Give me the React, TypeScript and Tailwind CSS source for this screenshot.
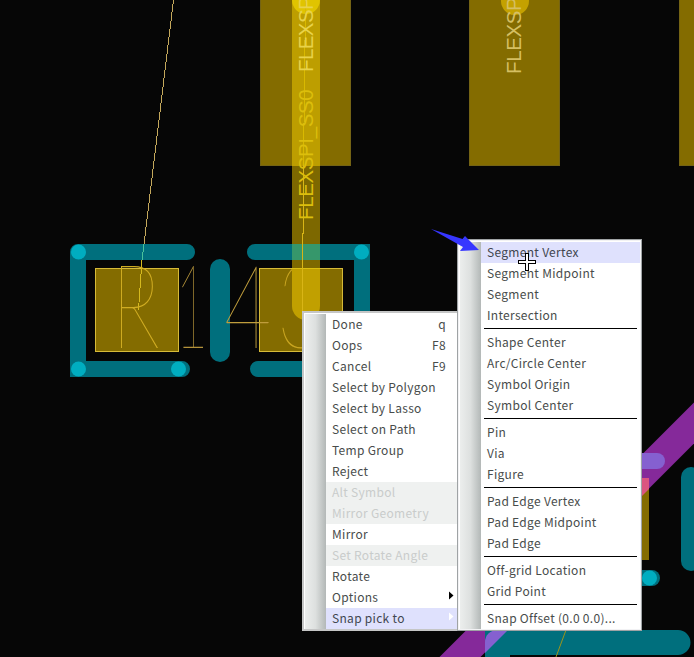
import React from "react";

type Item = {
  label: string;
  shortcut?: string;
  disabled?: boolean;
  active?: boolean;
  submenu?: boolean;
};

const commands: Item[] = [
  { label: "Done", shortcut: "q" },
  { label: "Oops", shortcut: "F8" },
  { label: "Cancel", shortcut: "F9" },
  { label: "Select by Polygon" },
  { label: "Select by Lasso" },
  { label: "Select on Path" },
  { label: "Temp Group" },
  { label: "Reject" },
  { label: "Alt Symbol", disabled: true },
  { label: "Mirror Geometry", disabled: true },
  { label: "Mirror" },
  { label: "Set Rotate Angle", disabled: true },
  { label: "Rotate" },
  { label: "Options", submenu: true },
  { label: "Snap pick to", submenu: true, active: true },
];

const snapGroups: Item[][] = [
  [
    { label: "Segment Vertex", active: true },
    { label: "Segment Midpoint" },
    { label: "Segment" },
    { label: "Intersection" },
  ],
  [
    { label: "Shape Center" },
    { label: "Arc/Circle Center" },
    { label: "Symbol Origin" },
    { label: "Symbol Center" },
  ],
  [{ label: "Pin" }, { label: "Via" }, { label: "Figure" }],
  [{ label: "Pad Edge Vertex" }, { label: "Pad Edge Midpoint" }, { label: "Pad Edge" }],
  [{ label: "Off-grid Location" }, { label: "Grid Point" }],
  [{ label: "Snap Offset (0.0 0.0)..." }],
];

function MenuRow({ item }: { item: Item }) {
  const tone = item.disabled
    ? "bg-[#eff1f0] text-[#c9cccb]"
    : item.active
      ? "bg-[#dfe1fd] text-[#41464f]"
      : "text-[#484c4b]";
  return (
    <div className={`flex h-[21px] items-center justify-between pl-[6px] ${tone}`}>
      <span className="whitespace-nowrap leading-[20px] pb-px">{item.label}</span>
      {item.shortcut && <span className="pr-[12px] leading-[20px] pb-px">{item.shortcut}</span>}
      {item.submenu && (
        <svg width="5" height="9" className={`mr-[4px] mb-[4px] ${item.active ? "fill-white" : "fill-black"}`}>
          <path d="M0 0.5 L4.5 4.5 L0 8.5Z" />
        </svg>
      )}
    </div>
  );
}

function Gutter() {
  return (
    <div className="w-[21px] shrink-0 bg-linear-to-r from-[#eceeed] via-[#dde0df] to-[#b3b8b7]" />
  );
}

function Board() {
  return (
    <svg width="694" height="657" viewBox="0 0 694 657" className="block">
      <rect width="694" height="657" fill="#060606" />
      {/* large pads */}
      <g fill="#846c00" stroke="#746314">
        <rect x="260.500" y="-5" width="90" height="170.500" />
        <rect x="469.500" y="-5" width="90" height="170.500" />
        <rect x="679.500" y="-5" width="90" height="170.500" />
      </g>
      <g fill="#846c00" stroke="#d6ba38">
        <rect x="95.500" y="268.500" width="83" height="83" />
        <rect x="259.500" y="268.500" width="83" height="83" />
      </g>
      <circle cx="515" cy="1" r="14" fill="#c4a100" />

      {/* diagonal trace, lower right */}
      <path d="M420 697 L717 400" stroke="#85299a" strokeWidth="29" />

      {/* silkscreen outline */}
      <g stroke="#006f7d" strokeWidth="16" strokeLinecap="round" fill="none">
        <path d="M78 252 H187 M78 252 V369 H182" />
        <path d="M255 252 H362 V369 H258" />
        <path d="M220 269 V352" strokeWidth="20" />
        <path d="M640 578 H652" />
        <path d="M691 477 V561" strokeWidth="20" />
        <path d="M497.500 670 V642.500 H678" strokeWidth="25" />
      </g>
      <g fill="#00adc0">
        <circle cx="78.500" cy="252" r="7.500" />
        <circle cx="78.500" cy="369" r="7.500" />
        <circle cx="178.500" cy="369" r="7.500" />
        <circle cx="361.500" cy="252" r="7.500" />
        <circle cx="649.500" cy="578" r="7.500" />
      </g>
      <path d="M630 461 H657" stroke="#8560d0" strokeWidth="16" strokeLinecap="round" />
      <path d="M485 642 a12 12 0 0 1 12 -12 h11 l-23 23Z" fill="#8560d0" />
      <rect x="632" y="478" width="17" height="82" fill="#846c00" />
      <path d="M632 478 H649 V489 L632 506Z" fill="#da5580" />
      <path d="M566 630 L556 657" stroke="#9d951b" />

      {/* last designator character, under the routed trace */}
      <text
        transform="translate(277 348) scale(0.72 1)"
        fontFamily="Lato"
        fontWeight="100"
        fontSize="117"
        fill="#c9a520"
      >
        3
      </text>

      {/* routed trace */}
      <rect x="292" y="0" width="28" height="166" fill="#bd9e00" />
      <path d="M292 166 h28 v79 h-28Z" fill="#7d6800" />
      <rect x="292" y="244" width="28" height="16" fill="#36976b" />
      <rect x="292" y="260" width="28" height="8" fill="#7d6800" />
      <path d="M292 268 h28 v38 a14 14 0 0 1 -28 0Z" fill="#c1a000" />
      <path d="M292 268.500 h28" stroke="#dcbf10" />
      <circle cx="306" cy="0" r="14" fill="#e0c400" />

      {/* airwires */}
      <g shapeRendering="crispEdges" fill="none">
        <path d="M173.500 0 L144 244" stroke="#c3a75b" />
        <path d="M144 244 L142 260" stroke="#4ac19a" />
        <path d="M142 260 L138.500 310" stroke="#d5b91e" />
        <path d="M305.500 0 L303.500 165" stroke="#d9b900" />
        <path d="M303.500 165 V233 L302.500 234 V312" stroke="#d9b516" />
      </g>

      {/* reference designator */}
      <g fontFamily="Lato" fontWeight="100" fontSize="117" fill="#b3923a">
        <text transform="translate(111.500 348) scale(0.7 1)" fill="#d0ac22">R</text>
        <text transform="translate(175.500 348) scale(0.48 1)">1</text>
        <text transform="translate(224 348) scale(0.7 1)" fill="#bf9d3c">4</text>
      </g>

      {/* net names */}
      <g fontFamily="Liberation Sans" fontSize="20.500">
        <text transform="translate(313 220) rotate(-90)" textLength="131" fill="#dcbe0c">FLEXSPI_SS0</text>
        <text transform="translate(313 72) rotate(-90)" textLength="129" fill="#e8d24a">FLEXSPI_SS0</text>
        <text transform="translate(521 74) rotate(-90)" textLength="131" fill="#d5bf62">FLEXSPI_SS1</text>
      </g>
    </svg>
  );
}

export default function App() {
  return (
    <div className="relative h-[657px] w-[694px] overflow-hidden bg-[#060606] font-['Noto_Sans_CJK_SC','Noto_Sans',sans-serif] text-[12px] leading-[20px] tracking-[0.3px]">
      <Board />

      <div className="absolute left-[302px] top-[311px] flex h-[320px] w-[160px] border-2 border-[#c5c6c6] bg-white pt-px pl-px">
        <Gutter />
        <div className="w-[132px]">
          {commands.map((item) => (
            <MenuRow key={item.label} item={item} />
          ))}
        </div>
      </div>

      <div className="absolute left-[457px] top-[239px] flex h-[392px] w-[185px] border border-[#9fa3a5] bg-white">
        <div className="flex w-full border border-[#f2f2f4] pt-px pl-px">
          <Gutter />
          <div className="w-[159px]">
            {snapGroups.map((group, i) => (
              <React.Fragment key={i}>
                {i > 0 && (
                  <div className="h-[6px] pt-[2px] pl-[3px] pr-[3px]">
                    <div className="h-px bg-black" />
                  </div>
                )}
                {group.map((item) => (
                  <MenuRow key={item.label} item={item} />
                ))}
              </React.Fragment>
            ))}
          </div>
        </div>
      </div>

      {/* pointer arrow and crosshair cursor */}
      <svg width="110" height="50" viewBox="428 225 110 50" className="absolute left-[428px] top-[225px]">
        <path d="M431 229 L462.500 239 L465 236 L479 250 L460 251 L463 247 Z" fill="#3636ff" />
        <path
          d="M525.500 253.500 h3 v7 h7 v3 h-7 v7 h-3 v-7 h-7 v-3 h7Z"
          fill="#fff"
          stroke="#000"
          shapeRendering="crispEdges"
        />
      </svg>
    </div>
  );
}
